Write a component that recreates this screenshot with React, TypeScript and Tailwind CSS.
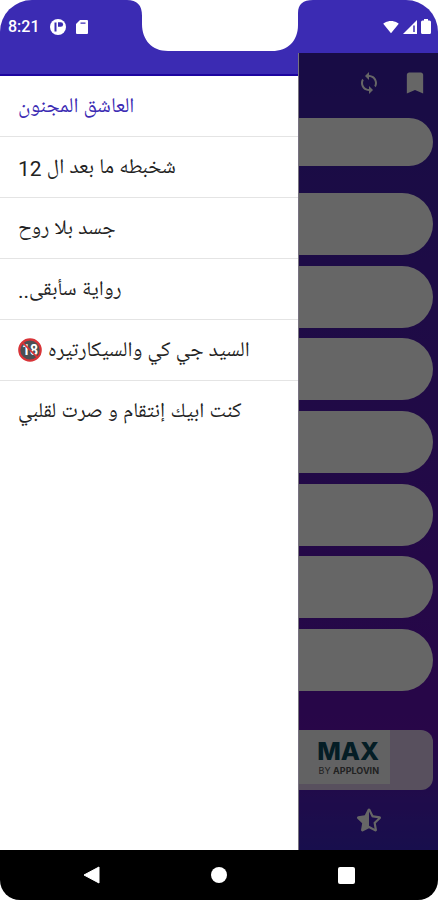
import { MdBookmark, MdSignalWifi4Bar, MdSync } from "react-icons/md";
import { FaStarHalfAlt } from "react-icons/fa";

interface IStory {
  title: string;
  active?: boolean;
  adult?: boolean;
}

const stories: IStory[] = [
  { title: "العاشق المجنون", active: true },
  { title: "شخبطه ما بعد ال 12" },
  { title: "جسد بلا روح" },
  { title: "رواية سأبقى.." },
  { title: "السيد جي كي والسيكارتيره", adult: true },
  { title: "كنت ابيك إنتقام و صرت لقلبي" },
];

const chapters = [1, 2, 3, 4, 5, 6, 7];

const AdultIcon = () => (
  <svg viewBox="0 0 24 24" className="size-6" role="img" aria-label="18+">
    <circle cx="12" cy="12" r="10.7" fill="#4b5054" />
    <text x="12" y="17" textAnchor="middle" fontSize="14" fontWeight="700" fill="#fff" fontFamily="Roboto, sans-serif">
      18
    </text>
    <circle cx="12" cy="12" r="10.7" fill="none" stroke="#d83438" strokeWidth="2.2" />
    <path d="M4.600 4.600 19.400 19.400" stroke="#d83438" strokeWidth="1.6" />
  </svg>
);

const StatusBar = () => (
  <header className="flex h-[53px] bg-[#3b2bb3] text-white">
    <div className="flex flex-1 items-center gap-2.5 pl-2">
      <span className="text-base font-medium">8:21</span>
      <svg viewBox="0 0 16 16" className="size-4">
        <circle cx="8" cy="8" r="8" fill="#fff" />
        <path d="M5.500 3.500v9" stroke="#3b2bb3" strokeWidth="2" />
        <path d="M8 3.200h2.800a2.300 2.300 0 0 1 0 4.600H8Z" fill="#3b2bb3" />
      </svg>
      <svg viewBox="0 0 12 14" className="h-[14px] w-3">
        <path d="M4 0H11Q12 0 12 1V13Q12 14 11 14H1Q0 14 0 13V4Z" fill="#fff" />
        <path d="M4.500 3.200H9.500" stroke="#3b2bb3" strokeWidth="1.200" />
      </svg>
    </div>
    <svg viewBox="0 0 186 53" className="h-[53px] w-[186px] shrink-0">
      <path
        d="M0 0C10 0 15 5 15 16V24C15 40 25 51 41 51H145C161 51 171 41 171 25V13C171 4 176 0 186 0Z"
        fill="#fff"
      />
    </svg>
    <div className="flex flex-1 items-center justify-end gap-1 pr-[7px]">
      <MdSignalWifi4Bar className="size-4" />
      <svg viewBox="0 0 14 14" className="size-[14px]">
        <path d="M14 0V14H0Z" fill="#fff" />
        <path d="M11 5.500V12" stroke="#3b2bb3" strokeWidth="1.500" />
      </svg>
      <svg viewBox="0 0 10 15" className="h-[15px] w-[10px]">
        <path d="M3 0H7V1.500H8.500Q10 1.500 10 3V13.500Q10 15 8.500 15H1.500Q0 15 0 13.500V3Q0 1.500 1.500 1.500H3Z" fill="#fff" />
      </svg>
    </div>
  </header>
);

const Reader = () => (
  <section className="flex flex-1 flex-col bg-linear-to-b from-[#3c20ac] via-[#640fb4] via-85% to-[#3c24c0] px-[5px]">
    <div className="flex h-[65px] items-center justify-end gap-5 pr-1 pb-1.5 text-white">
      <button aria-label="Refresh">
        <MdSync className="size-6" />
      </button>
      <button aria-label="Bookmark">
        <MdBookmark className="size-7" />
      </button>
    </div>
    <input aria-label="Search" className="h-12 w-full rounded-full bg-white px-5" />
    <div className="mt-[27px] mb-[39px] flex flex-1 flex-col justify-between gap-2">
      {chapters.map((n) => (
        <button key={n} aria-label={`Chapter ${n}`} className="h-[62px] w-full rounded-full bg-white" />
      ))}
    </div>
    <div className="flex h-[60px] justify-end overflow-hidden rounded-xl bg-[#dcc8ec] pr-[43px]">
      <div className="flex h-[54px] flex-1 flex-col items-end justify-center bg-[#f4f4f8] pr-[11px] font-[Inter,sans-serif]">
        <span className="text-[25px] leading-7 font-extrabold text-[#0a4a5c]">MAX</span>
        <span className="text-[9px] leading-3 text-[#555]">
          BY <b>APPLOVIN</b>
        </span>
      </div>
    </div>
    <div className="flex h-[60px] items-center justify-end pr-[52px] text-white">
      <button aria-label="Rate">
        <FaStarHalfAlt className="size-6" />
      </button>
    </div>
  </section>
);

const Drawer = () => (
  <nav className="absolute inset-y-0 left-0 w-[299px] border-r border-[#77727f] bg-white">
    <div className="h-[23px] border-b-2 border-[#1d05a0] bg-[#3b2bb3]" />
    <ul dir="rtl">
      {stories.map((story) => (
        <li key={story.title} className="border-b border-[#e4e4e4] last:border-b-0">
          <a
            href="#"
            className={`flex h-[60px] items-center justify-end gap-1.5 px-[18px] text-[21px] ${
              story.active ? "text-[#3b2bb3]" : "text-[#222]"
            }`}
          >
            <span className="pt-1.5">{story.title}</span>
            {story.adult && <AdultIcon />}
          </a>
        </li>
      ))}
    </ul>
  </nav>
);

const SystemNav = () => (
  <footer className="flex h-[50px] items-center justify-around bg-black px-7">
    <button aria-label="Back">
      <svg viewBox="0 0 18 18" className="size-[18px]">
        <path d="M1 9 16 1V17Z" fill="#fff" stroke="#fff" strokeLinejoin="round" />
      </svg>
    </button>
    <button aria-label="Home" className="size-4 rounded-full bg-white" />
    <button aria-label="Recents" className="size-[17px] rounded-xs bg-white" />
  </footer>
);

export default function App() {
  return (
    <div className="bg-white">
      <div className="flex min-h-screen flex-col overflow-hidden rounded-t-[32px] rounded-b-[20px] font-[Roboto,'Noto_Naskh_Arabic_UI','Noto_Naskh_Arabic','DejaVu_Sans',sans-serif]">
        <StatusBar />
        <main className="relative flex flex-1 flex-col">
          <Reader />
          <div className="absolute inset-0 bg-black/60" />
          <Drawer />
        </main>
        <SystemNav />
      </div>
    </div>
  );
}
